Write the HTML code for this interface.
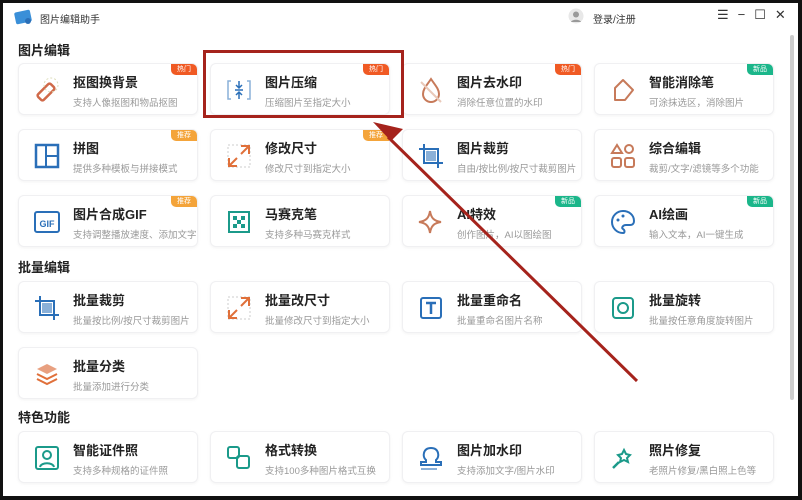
<!DOCTYPE html><html><head><meta charset="utf-8"><style>
*{margin:0;padding:0;box-sizing:border-box}
body{width:802px;height:500px;background:#111;position:relative;overflow:hidden;font-family:"Liberation Sans","Noto Sans CJK SC",sans-serif}
.win{position:absolute;left:3px;top:3px;width:795px;height:493px;background:#fff}
.t{position:absolute;white-space:nowrap}
.sec{position:absolute;left:15px;font-size:13px;font-weight:bold;color:#222}
.card{position:absolute;width:180px;height:52px;background:#fff;border:1px solid #f0f0f2;border-radius:6px;box-shadow:0 1px 3px rgba(0,0,0,.05)}
.card .h{position:absolute;left:54px;top:8px;font-size:13px;font-weight:bold;color:#222;white-space:nowrap}
.card .s{position:absolute;left:54px;top:31px;font-size:9.5px;color:#999;white-space:nowrap}
.card svg{position:absolute;left:14px;top:12px}
.tag{position:absolute;right:0;top:0;width:26px;height:11px;border-radius:0 5px 0 5px;font-size:7px;color:#fff;text-align:center;line-height:11px}
.hot{background:#f05a24}.rec{background:#f4a43a}.new{background:#1bb68a}
</style></head><body><div class="win">
<svg class="t" style="left:11px;top:6px" width="20" height="16"><rect x="1" y="2" width="16" height="12" rx="2" fill="#3a8fd8" transform="rotate(-12 9 8)"/><circle cx="14" cy="12" r="3" fill="#2a6fb8"/></svg>
<div class="t" style="left:37px;top:8px;font-size:10px;color:#333">图片编辑助手</div>
<svg class="t" style="left:565px;top:5px" width="16" height="16"><circle cx="8" cy="8" r="7.5" fill="#e8e8e8"/><circle cx="8" cy="6.5" r="3" fill="#999"/><path d="M3 14c1-3 9-3 10 0" fill="#999"/></svg>
<div class="t" style="left:590px;top:8px;font-size:10px;color:#333">登录/注册</div>
<div class="t" style="left:714px;top:4px;font-size:13px;color:#333;letter-spacing:9px">☰−☐✕</div>
<div style="position:absolute;left:787px;top:32px;width:4px;height:365px;background:#ccc;border-radius:2px"></div>
<div class="sec" style="top:37px">图片编辑</div>
<div class="sec" style="top:254px">批量编辑</div>
<div class="sec" style="top:404px">特色功能</div>

<div class="card" style="left:15px;top:60px"><svg width="28" height="28"><rect x="4" y="12" width="18" height="8" rx="2" fill="none" stroke="#d06a4a" stroke-width="2.5" transform="rotate(-45 13 16)"/><circle cx="18" cy="9" r="7" fill="none" stroke="#ddb" stroke-dasharray="2 2"/></svg><div class="h">抠图换背景</div><div class="s">支持人像抠图和物品抠图</div><div class="tag hot">热门</div></div>
<div class="card" style="left:207px;top:60px"><svg width="28" height="28"><path d="M6 5H3v18h3M22 5h3v18h-3" fill="none" stroke="#8ab0d8" stroke-width="1.5"/><path d="M14 5v7M11 9l3 3 3-3M10 14h8M14 23v-7M11 19l3-3 3 3" fill="none" stroke="#2a6fb8" stroke-width="1.5"/></svg><div class="h">图片压缩</div><div class="s">压缩图片至指定大小</div><div class="tag hot">热门</div></div>
<div class="card" style="left:399px;top:60px"><svg width="28" height="28"><path d="M14 3c-4 6-8 10-8 15a8 8 0 0016 0c0-5-4-9-8-15z" fill="none" stroke="#c77a5a" stroke-width="2"/><path d="M4 6l20 20" stroke="#e9c9b9" stroke-width="2"/></svg><div class="h">图片去水印</div><div class="s">消除任意位置的水印</div><div class="tag hot">热门</div></div>
<div class="card" style="left:591px;top:60px"><svg width="28" height="28"><path d="M6 12l8-8 10 10-8 10H6z" fill="none" stroke="#c77a5a" stroke-width="2" stroke-linejoin="round"/></svg><div class="h">智能消除笔</div><div class="s">可涂抹选区，消除图片</div><div class="tag new">新品</div></div>

<div class="card" style="left:15px;top:126px"><svg width="28" height="28"><rect x="3" y="3" width="22" height="22" fill="none" stroke="#2a6fb8" stroke-width="2.5"/><path d="M13 3v22M13 14h12" stroke="#2a6fb8" stroke-width="2"/></svg><div class="h">拼图</div><div class="s">提供多种模板与拼接模式</div><div class="tag rec">推荐</div></div>
<div class="card" style="left:207px;top:126px"><svg width="28" height="28"><rect x="3" y="3" width="22" height="22" fill="none" stroke="#ccc" stroke-dasharray="2 2"/><path d="M16 4h8v8M24 4l-8 8M12 24H4v-8M4 24l8-8" fill="none" stroke="#e0703a" stroke-width="2"/></svg><div class="h">修改尺寸</div><div class="s">修改尺寸到指定大小</div><div class="tag rec">推荐</div></div>
<div class="card" style="left:399px;top:126px"><svg width="28" height="28"><path d="M7 2v19h19M2 7h19v19" fill="none" stroke="#2a6fb8" stroke-width="2"/><rect x="9" y="9" width="10" height="10" fill="#8ab0d8"/></svg><div class="h">图片裁剪</div><div class="s">自由/按比例/按尺寸裁剪图片</div></div>
<div class="card" style="left:591px;top:126px"><svg width="28" height="28"><path d="M8 3l5 8H3z" fill="none" stroke="#c77a5a" stroke-width="2"/><circle cx="20" cy="7" r="4" fill="none" stroke="#c77a5a" stroke-width="2"/><rect x="3" y="16" width="9" height="9" rx="2" fill="none" stroke="#c77a5a" stroke-width="2"/><rect x="16" y="16" width="9" height="9" rx="2" fill="none" stroke="#c77a5a" stroke-width="2"/></svg><div class="h">综合编辑</div><div class="s">裁剪/文字/滤镜等多个功能</div></div>

<div class="card" style="left:15px;top:192px"><svg width="28" height="28"><rect x="2" y="4" width="24" height="20" rx="2" fill="none" stroke="#2a6fb8" stroke-width="2"/><text x="14" y="19" font-size="9" font-weight="bold" fill="#2a6fb8" text-anchor="middle" font-family="Liberation Sans">GIF</text></svg><div class="h">图片合成GIF</div><div class="s">支持调整播放速度、添加文字</div><div class="tag rec">推荐</div></div>
<div class="card" style="left:207px;top:192px"><svg width="28" height="28"><rect x="4" y="4" width="20" height="20" fill="none" stroke="#1b9a8a" stroke-width="2"/><path d="M8 8h4v4H8zM16 8h4v4h-4zM12 12h4v4h-4zM8 16h4v4H8zM16 16h4v4h-4z" fill="#1b9a8a"/></svg><div class="h">马赛克笔</div><div class="s">支持多种马赛克样式</div></div>
<div class="card" style="left:399px;top:192px"><svg width="28" height="28"><path d="M13 3c1 7 4 10 11 11-7 1-10 4-11 11-1-7-4-10-11-11 7-1 10-4 11-11z" fill="none" stroke="#c77a5a" stroke-width="2"/></svg><div class="h">AI特效</div><div class="s">创作图片，AI以图绘图</div><div class="tag new">新品</div></div>
<div class="card" style="left:591px;top:192px"><svg width="28" height="28"><path d="M14 3a11 11 0 100 22c2 0 2-3 0-4s0-4 3-4h4c3 0 4-2 4-4C25 7 20 3 14 3z" fill="none" stroke="#2a6fb8" stroke-width="2"/><circle cx="9" cy="12" r="1.5" fill="#2a6fb8"/><circle cx="14" cy="8" r="1.5" fill="#2a6fb8"/></svg><div class="h">AI绘画</div><div class="s">输入文本，AI一键生成</div><div class="tag new">新品</div></div>

<div class="card" style="left:15px;top:278px"><svg width="28" height="28"><path d="M7 2v19h19M2 7h19v19" fill="none" stroke="#2a6fb8" stroke-width="2"/><rect x="9" y="9" width="10" height="10" fill="#8ab0d8"/></svg><div class="h">批量裁剪</div><div class="s">批量按比例/按尺寸裁剪图片</div></div>
<div class="card" style="left:207px;top:278px"><svg width="28" height="28"><rect x="3" y="3" width="22" height="22" fill="none" stroke="#ccc" stroke-dasharray="2 2"/><path d="M16 4h8v8M24 4l-8 8M12 24H4v-8M4 24l8-8" fill="none" stroke="#e0703a" stroke-width="2"/></svg><div class="h">批量改尺寸</div><div class="s">批量修改尺寸到指定大小</div></div>
<div class="card" style="left:399px;top:278px"><svg width="28" height="28"><rect x="4" y="4" width="20" height="20" rx="2" fill="none" stroke="#2a6fb8" stroke-width="2"/><path d="M9 9h10M14 9v11" stroke="#2a6fb8" stroke-width="2.5"/></svg><div class="h">批量重命名</div><div class="s">批量重命名图片名称</div></div>
<div class="card" style="left:591px;top:278px"><svg width="28" height="28"><rect x="4" y="4" width="20" height="20" rx="3" fill="none" stroke="#1b9a8a" stroke-width="2"/><circle cx="14" cy="14" r="5" fill="none" stroke="#1b9a8a" stroke-width="2"/></svg><div class="h">批量旋转</div><div class="s">批量按任意角度旋转图片</div></div>
<div class="card" style="left:15px;top:344px"><svg width="28" height="28"><path d="M14 4l10 5-10 5-10-5z" fill="#e8a080"/><path d="M4 14l10 5 10-5M4 19l10 5 10-5" fill="none" stroke="#e0703a" stroke-width="2"/></svg><div class="h">批量分类</div><div class="s">批量添加进行分类</div></div>

<div class="card" style="left:15px;top:428px"><svg width="28" height="28"><rect x="3" y="3" width="22" height="22" rx="2" fill="none" stroke="#1b9a8a" stroke-width="2"/><circle cx="14" cy="11" r="4" fill="none" stroke="#1b9a8a" stroke-width="2"/><path d="M7 23c1-5 13-5 14 0" fill="none" stroke="#1b9a8a" stroke-width="2"/></svg><div class="h">智能证件照</div><div class="s">支持多种规格的证件照</div></div>
<div class="card" style="left:207px;top:428px"><svg width="28" height="28"><rect x="3" y="3" width="11" height="11" rx="2" fill="none" stroke="#1b9a8a" stroke-width="2"/><rect x="12" y="12" width="12" height="12" rx="2" fill="none" stroke="#1b9a8a" stroke-width="2"/></svg><div class="h">格式转换</div><div class="s">支持100多种图片格式互换</div></div>
<div class="card" style="left:399px;top:428px"><svg width="28" height="28"><path d="M9 16c-4-3-3-12 5-12s9 9 5 12v2h5v3H4v-3h5z" fill="none" stroke="#2a6fb8" stroke-width="2"/><path d="M4 25h16" stroke="#8ab0d8" stroke-width="2"/></svg><div class="h">图片加水印</div><div class="s">支持添加文字/图片水印</div></div>
<div class="card" style="left:591px;top:428px"><svg width="28" height="28"><path d="M15 6l2 4 4 1-3 3 1 4-4-2-4 2 1-4-3-3 4-1z" fill="none" stroke="#1b9a8a" stroke-width="2"/><path d="M10 18l-6 6" stroke="#1b9a8a" stroke-width="2.5"/></svg><div class="h">照片修复</div><div class="s">老照片修复/黑白照上色等</div></div>
</div>
<div style="position:absolute;left:203px;top:50px;width:201px;height:68px;border:3px solid #a5231c"></div>
<svg style="position:absolute;left:0;top:0" width="802" height="500"><path d="M637 381L388 137" stroke="#a5231c" stroke-width="3"/><path d="M373 122l30 7-12 12z" fill="#a5231c"/></svg>
</body></html>
